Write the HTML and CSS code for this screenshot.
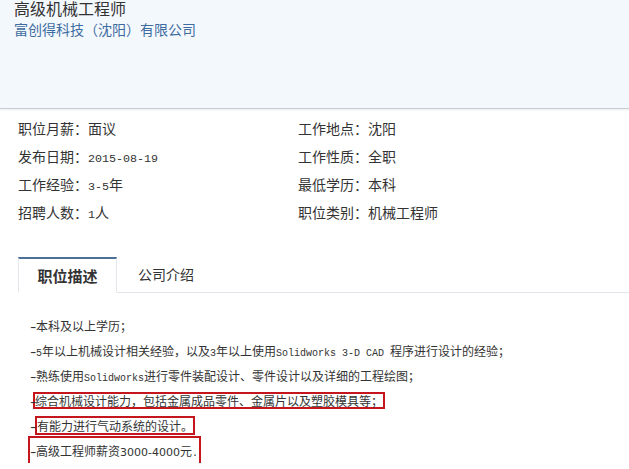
FILE: index.html
```html
<!DOCTYPE html>
<html lang="zh-CN">
<head>
    <meta charset="UTF-8">
    <meta name="viewport" content="width=device-width, initial-scale=1.0">
    <title>高级机械工程师</title>
    <link rel="stylesheet" href="styles.css">
</head>
<body>
    <header class="job-header">
        <h1 class="job-title">高级机械工程师</h1>
        <div class="company">富创得科技（沈阳）有限公司</div>
    </header>

    <div class="job-info">
        <div class="info-item">职位月薪：面议</div>
        <div class="info-item">工作地点：沈阳</div>
        <div class="info-item">发布日期：<span class="num">2015-08-19</span></div>
        <div class="info-item">工作性质：全职</div>
        <div class="info-item">工作经验：<span class="num">3-5</span>年</div>
        <div class="info-item">最低学历：本科</div>
        <div class="info-item">招聘人数：<span class="num">1</span>人</div>
        <div class="info-item">职位类别：机械工程师</div>
    </div>

    <div class="tabs">
        <div class="tab active">职位描述</div>
        <div class="tab">公司介绍</div>
        <div class="tab-rest"></div>
    </div>

    <div class="desc">
        <div class="line"><span class="dash">-</span>本科及以上学历；</div>
        <div class="line"><span class="dash">-</span><span class="en">5</span>年以上机械设计相关经验，以及<span class="en">3</span>年以上使用<span class="en">Solidworks 3-D CAD </span>程序进行设计的经验；</div>
        <div class="line"><span class="dash">-</span>熟练使用<span class="en">Solidworks</span>进行零件装配设计、零件设计以及详细的工程绘图；</div>
        <div class="line"><span class="dash">-</span><span class="mark mark-a">综合机械设计能力，包括金属成品零件、金属片以及塑胶模具等；</span></div>
        <div class="line"><span class="dash">-</span><span class="mark mark-b">有能力进行气动系统的设计。</span></div>
        <div class="line"><span class="mark mark-c"><span class="dash">-</span>高级工程师薪资<span class="digits">3000-4000</span>元<span class="en">.</span></span></div>
    </div>
</body>
</html>
```

FILE: styles.css
```css
body {
    margin: 0;
    font-family: "Noto Sans CJK SC", "Noto Sans", sans-serif;
    color: #333;
    background: #fff;
}

.job-header {
    height: 108px;
    padding: 0 14px;
    background-color: #f3f8fd;
    border-bottom: 1px solid #c9ced4;
    box-shadow: 0 1px 2px rgba(0, 0, 0, 0.08);
}

.job-title {
    margin: 0;
    font-size: 16px;
    line-height: 17px;
    font-weight: normal;
    color: #333;
}

.company {
    font-size: 14px;
    line-height: 24px;
    color: #3e6c9f;
}

.job-info {
    display: grid;
    grid-template-columns: 280px 1fr;
    padding: 5px 0 0 18px;
}

.info-item {
    height: 28px;
    font-size: 14px;
    line-height: 28px;
}

.num {
    font-family: "Liberation Mono", monospace;
    font-size: 11.7px;
    line-height: 1;
}

.tabs {
    display: flex;
    margin: 31px 0 0 18px;
    height: 36px;
}

.tab {
    box-sizing: border-box;
    height: 36px;
    padding: 0 21px;
    font-size: 14px;
    line-height: 34px;
    border-bottom: 1px solid #e1e5ea;
}

.tab.active {
    width: 99px;
    padding: 0;
    text-align: center;
    font-size: 15px;
    font-weight: bold;
    border-top: 2px solid #4d7096;
    border-left: 1px solid #e4e7eb;
    border-right: 1px solid #e4e7eb;
    border-bottom: 1px solid #fff;
}

.tab-rest {
    flex: 1;
    border-bottom: 1px solid #e1e5ea;
}

.desc {
    padding: 20px 0 0 30px;
    font-size: 12px;
}

.line {
    height: 25px;
    line-height: 25px;
    white-space: nowrap;
}

.en {
    font-family: "Liberation Mono", monospace;
    font-size: 10px;
    line-height: 1;
}

.dash {
    display: inline-block;
    width: 6px;
    font-family: "Liberation Sans", sans-serif;
    font-size: 12px;
    line-height: 1;
    transform: scaleX(1.6);
    transform-origin: left center;
}

.digits {
    font-family: "DejaVu Sans", sans-serif;
    font-size: 11px;
    line-height: 1;
}

.mark {
    display: inline-block;
    border: 2px solid #c4161c;
    vertical-align: baseline;
}

.mark-a {
    line-height: 13px;
    margin-left: -3px;
}

.mark-b {
    line-height: 15px;
    margin-left: -1px;
}

.mark-c {
    line-height: 26px;
    margin: -3px 0 -3px -2px;
    padding-right: 1px;
}
```
